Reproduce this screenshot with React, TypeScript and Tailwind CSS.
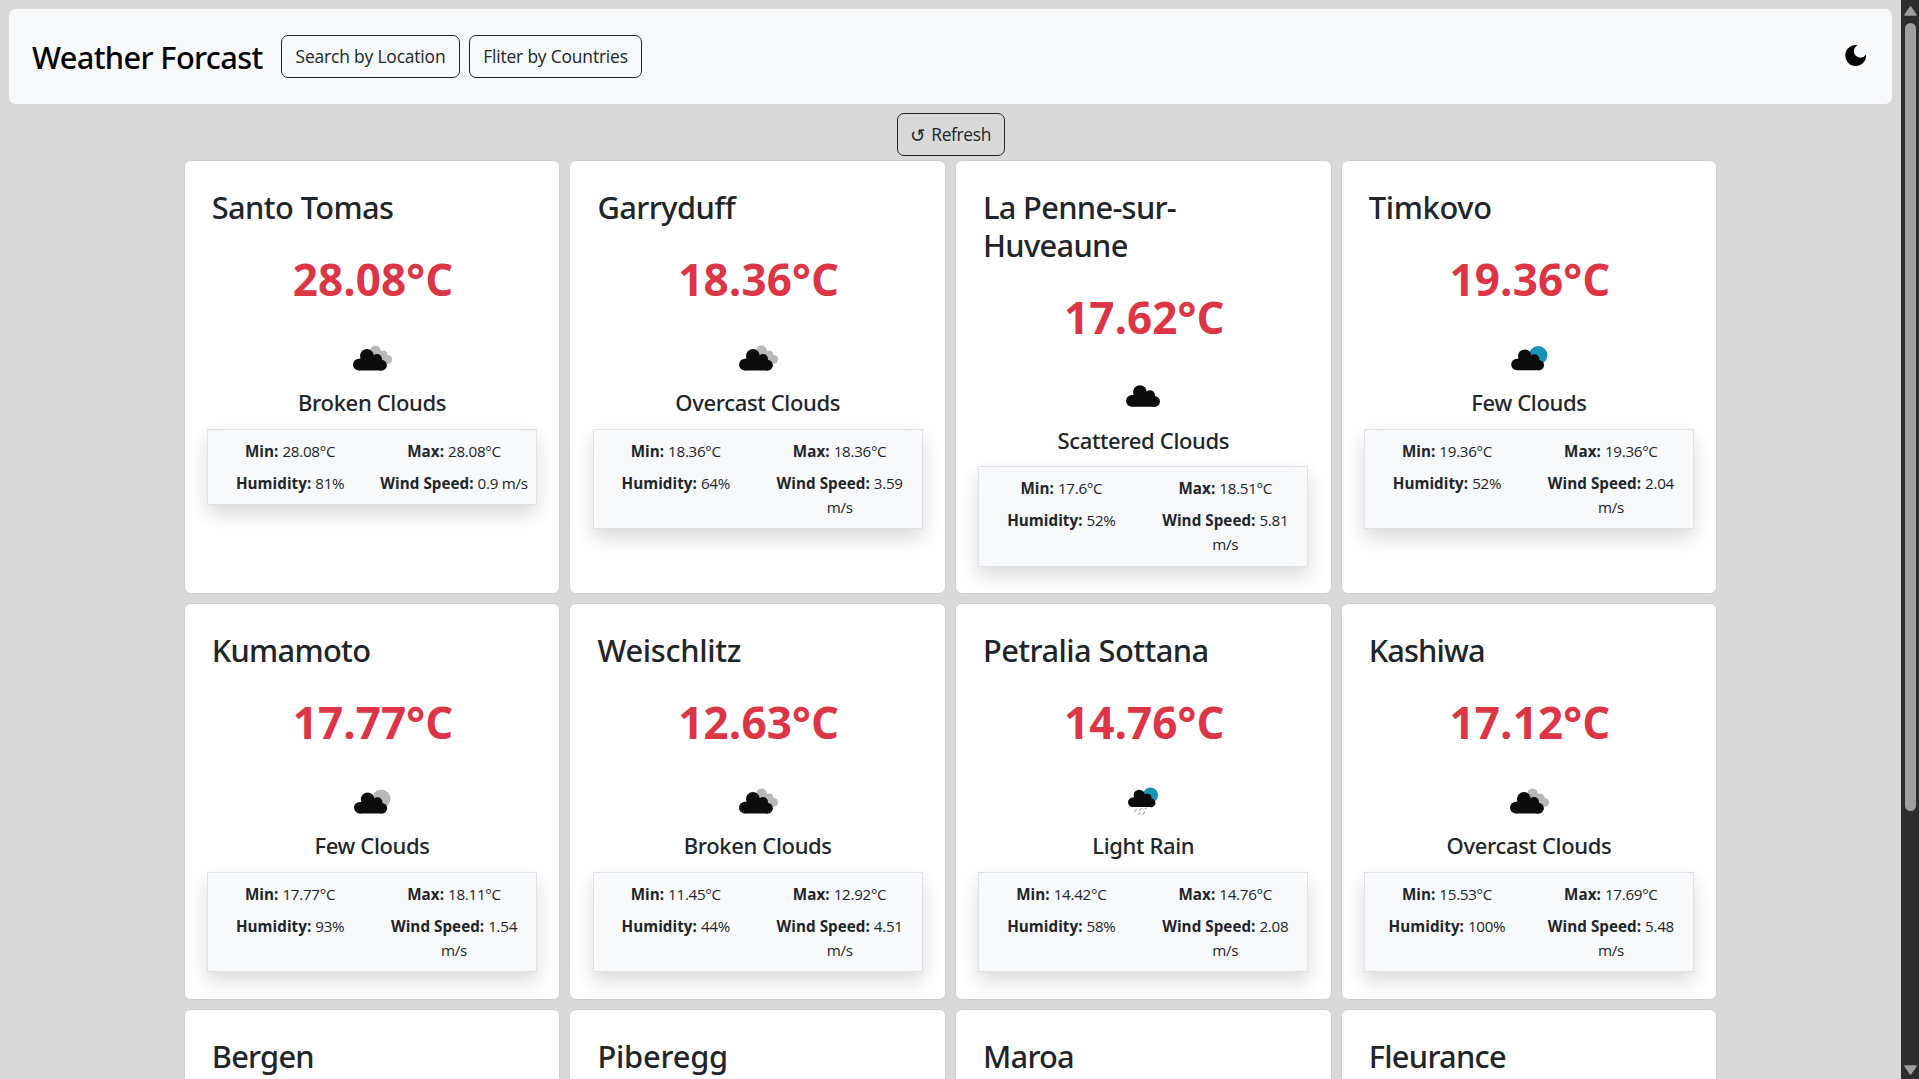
type IconKind = "broken" | "scattered" | "few-day" | "few-night" | "rain";

interface Reading {
  temp: string;
  icon: IconKind;
  label: string;
  min: string;
  max: string;
  humidity: string;
  wind: string;
}

interface City {
  name: string;
  track: string;
  reading?: Reading;
}

const cities: City[] = [
  { name: "Santo Tomas", track: "tracking-[-0.6px]", reading: { temp: "28.08", icon: "broken", label: "Broken Clouds", min: "28.08", max: "28.08", humidity: "81", wind: "0.9" } },
  { name: "Garryduff", track: "tracking-[-0.55px]", reading: { temp: "18.36", icon: "broken", label: "Overcast Clouds", min: "18.36", max: "18.36", humidity: "64", wind: "3.59" } },
  { name: "La Penne-sur-Huveaune", track: "tracking-[-0.68px]", reading: { temp: "17.62", icon: "scattered", label: "Scattered Clouds", min: "17.6", max: "18.51", humidity: "52", wind: "5.81" } },
  { name: "Timkovo", track: "tracking-[-0.3px]", reading: { temp: "19.36", icon: "few-day", label: "Few Clouds", min: "19.36", max: "19.36", humidity: "52", wind: "2.04" } },
  { name: "Kumamoto", track: "tracking-[-0.7px]", reading: { temp: "17.77", icon: "few-night", label: "Few Clouds", min: "17.77", max: "18.11", humidity: "93", wind: "1.54" } },
  { name: "Weischlitz", track: "tracking-[-0.3px]", reading: { temp: "12.63", icon: "broken", label: "Broken Clouds", min: "11.45", max: "12.92", humidity: "44", wind: "4.51" } },
  { name: "Petralia Sottana", track: "tracking-[-0.55px]", reading: { temp: "14.76", icon: "rain", label: "Light Rain", min: "14.42", max: "14.76", humidity: "58", wind: "2.08" } },
  { name: "Kashiwa", track: "tracking-[-0.85px]", reading: { temp: "17.12", icon: "broken", label: "Overcast Clouds", min: "15.53", max: "17.69", humidity: "100", wind: "5.48" } },
  { name: "Bergen", track: "tracking-[-0.75px]" },
  { name: "Piberegg", track: "tracking-[-0.2px]" },
  { name: "Maroa", track: "tracking-[-0.75px]" },
  { name: "Fleurance", track: "tracking-[-0.7px]" },
];

/* Cloud silhouette, 34 x 21.5, drawn from its top left corner. */
const Cloud = ({ transform }: { transform: string }) => (
  <g transform={transform} fill="#0c0c0c">
    <circle cx="5.900" cy="15.600" r="5.900" />
    <circle cx="13.900" cy="6.900" r="6.900" />
    <circle cx="24" cy="10" r="5" />
    <circle cx="28.500" cy="16.200" r="5.400" />
    <path d="M5.900 21.500V9.700H7L14 6L20.500 6.500L25 7L29 12V21.500Z" />
  </g>
);

function WeatherIcon({ kind }: { kind: IconKind }) {
  return (
    <svg className="size-14" viewBox="0 0 56 56">
      {kind === "broken" && (
        <>
          <g fill="#b8b8b7">
            <circle cx="31.500" cy="20" r="5.400" />
            <circle cx="39.200" cy="23.600" r="4.200" />
            <circle cx="43.700" cy="28.300" r="4.400" />
            <path d="M27 22L34 17L45 27L42 32L34 32Z" />
          </g>
          <Cloud transform="translate(9 18)" />
        </>
      )}
      {kind === "scattered" && <Cloud transform="translate(11 16.200)" />}
      {kind === "few-day" && (
        <>
          <circle cx="37.200" cy="24.300" r="9.200" fill="#1793b6" />
          <Cloud transform="translate(10.200 18.400) scale(0.970)" />
        </>
      )}
      {kind === "few-night" && (
        <>
          <circle cx="37.300" cy="24.800" r="9.200" fill="#b8b8b7" />
          <Cloud transform="translate(10 18.400) scale(0.980)" />
        </>
      )}
      {kind === "rain" && (
        <>
          <circle cx="35.500" cy="21" r="7.600" fill="#1793b6" />
          <Cloud transform="translate(13 15.700) scale(0.810)" />
          <g stroke="#a3a3a3" strokeWidth="1.200" strokeLinecap="round">
            <path d="M21.200 35.500l-1.500 2M26.200 34.500l-1.300 1.800M31.200 34l-1 .8M24.700 39l-1 1.500M29.700 38l-1.400 2" />
          </g>
        </>
      )}
    </svg>
  );
}

function Stat({ label, value, unit, wrap }: { label: string; value: string; unit?: string; wrap?: boolean }) {
  return (
    <div className="text-center">
      <span className="font-bold tracking-[0.05px]">{label}: </span>
      {value}
      {unit && (wrap ? <br /> : " ")}
      {unit}
    </div>
  );
}

function Conditions({ reading }: { reading: Reading }) {
  return (
    <div className="mt-[25px] flex flex-col items-center">
      <div className="pl-[2px] text-[44px] leading-[54px] font-bold tracking-[0.1px] text-[#dc3545]">{reading.temp}°C</div>
      <div className="mt-[25px] h-14">
        <WeatherIcon kind={reading.icon} />
      </div>
      <div className="mt-[2px] font-['Noto_Sans'] text-[22px] leading-[27px] font-medium tracking-[-0.35px]">{reading.label}</div>
      <div className="mt-[12.8px] grid w-[329.8px] grid-cols-2 gap-y-2 border border-[#dee2e6] bg-[#f8f9fb] pt-[9px] pb-[9.2px] text-[15.2px] leading-6 tracking-[-0.3px] shadow-[0_9px_18px_rgba(0,0,0,0.15)]">
        <Stat label="Min" value={reading.min + "°C"} />
        <Stat label="Max" value={reading.max + "°C"} />
        <Stat label="Humidity" value={reading.humidity + "%"} />
        <Stat label="Wind Speed" value={reading.wind} unit="m/s" wrap={reading.wind.length > 3} />
      </div>
    </div>
  );
}

function CityCard({ city }: { city: City }) {
  return (
    <article className="rounded-[7px] border border-[#d0d0d0] bg-white pt-7">
      <h2 className={`px-[27px] font-['Noto_Sans'] text-[30.8px] leading-[37.8px] font-medium ${city.track}`}>{city.name}</h2>
      {city.reading && <Conditions reading={city.reading} />}
    </article>
  );
}

const buttonClass =
  "flex h-[43px] items-center justify-center rounded-[7px] border border-[#212529] text-[17.4px] leading-[27px] tracking-[-0.16px]";

export default function App() {
  return (
    <div className="flex h-screen overflow-hidden bg-[#d9d9d9] font-['Open_Sans','Noto_Sans',sans-serif] text-[#212529]">
      <div className="flex h-screen min-w-0 flex-1 flex-col overflow-hidden">
        <header className="mx-[9px] mt-[9px] flex h-[95px] shrink-0 items-center rounded-[7px] bg-[#f8f9fb] pr-[26px] pl-[23px]">
          <h1 className="w-[249px] pt-[2px] font-['Noto_Sans'] text-[30.8px] leading-[47px] font-medium tracking-[-0.65px] whitespace-nowrap text-black">Weather Forcast</h1>
          <button className={`${buttonClass} w-[179px]`}>Search by Location</button>
          <button className={`${buttonClass} ml-[9px] w-[173px]`}>Fliter by Countries</button>
          <svg className="mb-[3px] ml-auto size-[21px]" viewBox="0 0 21 21">
            <path d="M12.500 0.300A10.400 10.400 0 1 0 21 9.400A6.500 6.500 0 1 1 12.500 0.300Z" />
          </svg>
        </header>
        <div className="mt-[9px] flex h-[47px] shrink-0 justify-center">
          <button className={`${buttonClass} w-[108px]`}>
            <span className="mt-[2px] mr-[6px] font-['DejaVu_Sans'] text-[18.5px]">↺</span>
            <span className="tracking-[-0.35px]">Refresh</span>
          </button>
        </div>
        <main className="mx-auto grid w-[1533.5px] shrink-0 grid-cols-4 grid-rows-[434px_397px_397px] gap-[9px]">
          {cities.map((c) => (
            <CityCard key={c.name} city={c} />
          ))}
        </main>
      </div>
      <div className="flex h-screen w-[18px] shrink-0 flex-col items-center bg-[#2c2c2c] pt-[6px] pb-[4px]">
        <svg className="h-[10px] w-[13px]" viewBox="0 0 13 10">
          <path d="M6.500 1L12 9H1Z" fill="#9f9f9f" stroke="#9f9f9f" strokeWidth="1.500" strokeLinejoin="round" />
        </svg>
        <div className="mt-[7px] h-[788px] w-[11px] rounded-full bg-[#9f9f9f]" />
        <svg className="mt-auto h-[10px] w-[13px]" viewBox="0 0 13 10">
          <path d="M6.500 9L12 1H1Z" fill="#9f9f9f" stroke="#9f9f9f" strokeWidth="1.500" strokeLinejoin="round" />
        </svg>
      </div>
    </div>
  );
}
